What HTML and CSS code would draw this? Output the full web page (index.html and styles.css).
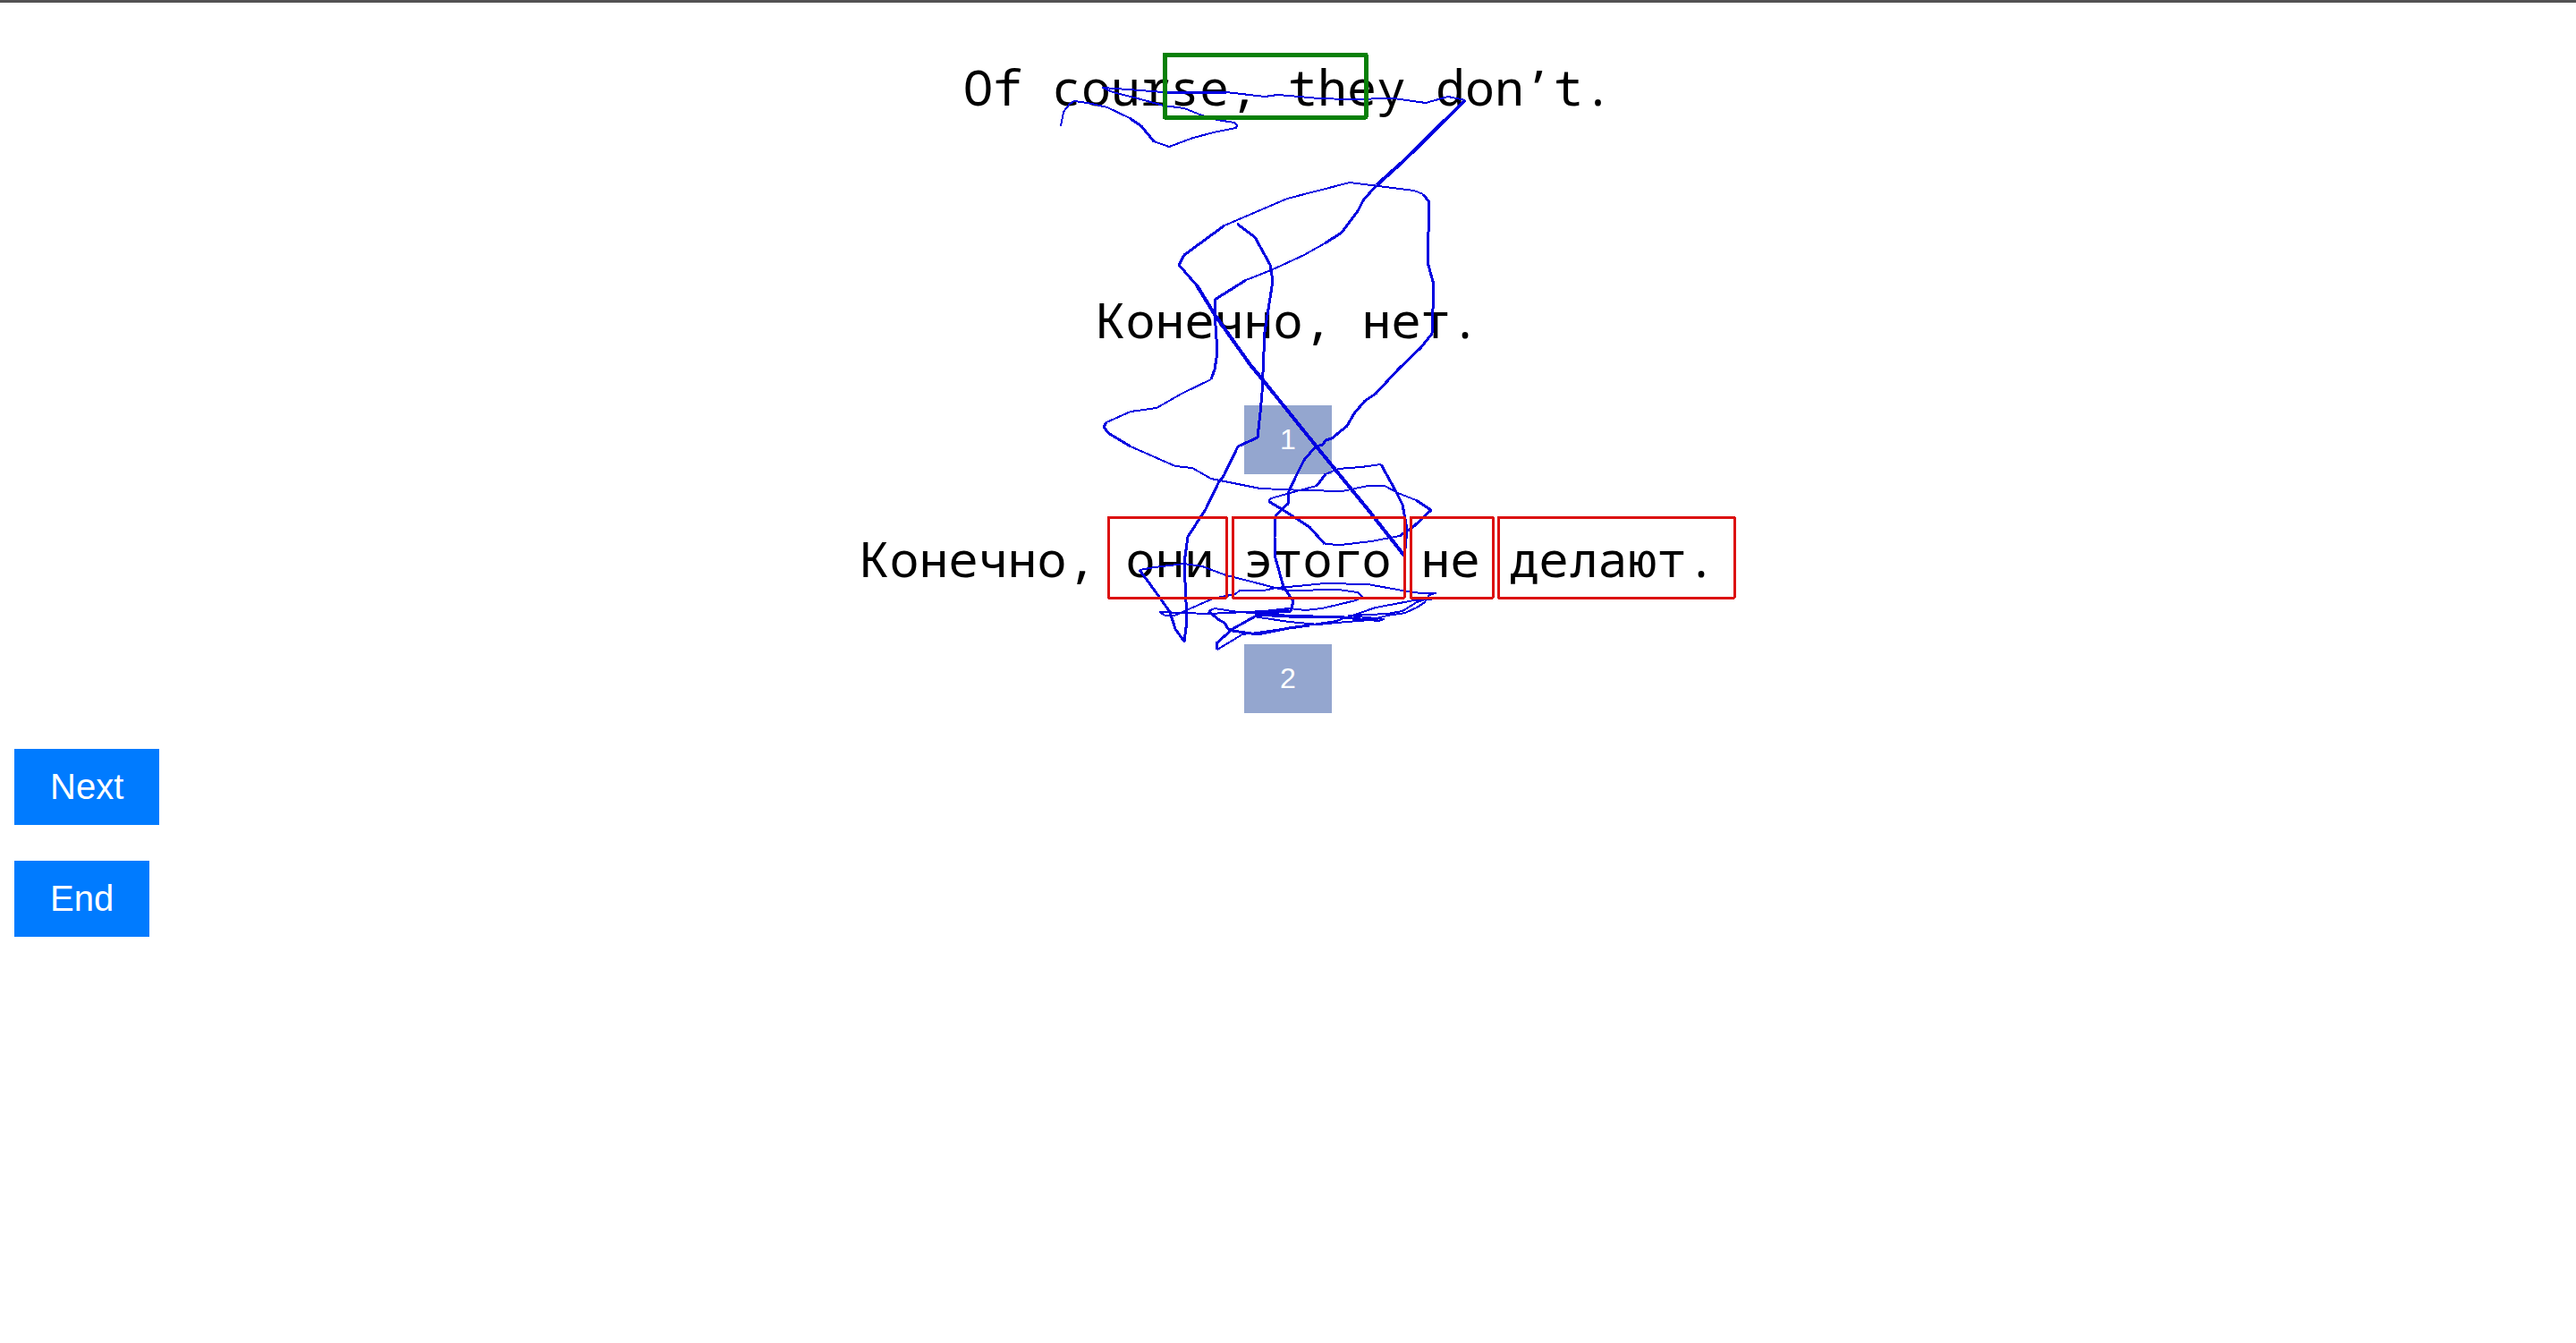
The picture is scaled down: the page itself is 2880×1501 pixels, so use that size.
FILE: index.html
```html
<!DOCTYPE html>
<html lang="ru">
<head>
<meta charset="utf-8">
<title>Translation choice</title>
<link rel="stylesheet" href="styles.css">
</head>
<body>
<main class="trial">
  <p class="sentence source" lang="en">Of course, they don’t.</p>
  <section class="option">
    <p class="sentence">Конечно, нет.</p>
    <button class="pick" type="button">1</button>
  </section>
  <section class="option">
    <p class="sentence">Конечно, они этого не делают.</p>
    <button class="pick" type="button">2</button>
  </section>
  <!-- pointer trace and word regions -->
  <svg class="overlay" viewBox="920 0 1040 760" aria-hidden="true">
    <g class="trace">
      <path d="M1185 140L1188 124L1195 115L1200 112L1215 114L1237 119L1262 131L1275 140L1289 157L1306 163L1333 153L1360 146L1381 142L1382 139L1379 136L1360 133L1343 128L1323 120L1300 117L1267 108L1243 102L1232 97L1260 99L1300 102L1370 102L1413 107L1427 105L1440 106L1473 109L1507 110L1557 109L1593 114L1618 107L1637 111"/>
      <path class="fast" d="M1262 131L1275 140L1289 157M1300 102L1370 102"/>
      <path class="fastest" d="M1637 111L1622 126L1567 180L1538 206"/>
      <path class="fast" d="M1538 206L1523 223L1517 235L1499 259L1480 271"/>
      <path d="M1480 271L1457 284L1420 301L1392 312"/>
      <path class="fast" d="M1392 312L1357 334L1358 363L1360 393L1357 412L1353 423"/>
      <path d="M1353 423L1320 439L1292 455L1263 459L1236 471L1233 476L1238 483L1263 498L1313 520L1332 522L1353 534L1408 545L1457 547L1500 548L1528 542L1547 542L1562 550L1582 558L1599 569"/>
      <path class="fast" d="M1236 471L1233 476L1238 483L1263 498M1582 558L1599 569L1580 587L1564 598"/>
      <path d="M1564 598L1532 604L1498 608L1480 607"/>
      <path class="fast" d="M1480 607L1463 588L1435 570L1417 559"/>
      <path d="M1417 559L1420 556L1441 550L1471 542L1481 529L1495 523L1521 521L1543 518"/>
      <path class="fast" d="M1471 542L1481 529M1543 518L1560 549L1567 563L1572 590L1569 624"/>
      <path class="fastest" d="M1569 620L1528 568L1474 502L1412 425L1397 407L1358 352L1337 318"/>
      <path class="fast" d="M1337 318L1317 295L1323 284L1368 251"/>
      <path d="M1368 251L1438 221L1508 203L1580 212L1590 216"/>
      <path class="fast" d="M1590 216L1597 225L1595 292L1602 317L1600 372L1587 388L1563 411L1537 439L1525 447L1513 461L1505 475L1488 489L1481 491L1478 496L1470 498L1457 513L1448 531L1439 550L1439 562L1432 568L1425 576L1424 600L1425 623L1427 630L1434 655L1445 671L1442 682L1403 685"/>
      <path class="fast" d="M1382 249L1402 264L1419 295L1422 313L1413 370L1410 438L1408 460L1405 488L1383 498L1367 531L1362 537L1347 568L1327 599L1323 628L1326 693L1323 716L1313 702L1307 683L1287 655L1273 636"/>
      <path d="M1273 636L1290 633L1323 629L1343 632L1370 642L1390 647L1425 656L1450 654L1480 651L1528 652L1567 659L1587 662L1604 662L1597 664L1592 672L1583 678L1570 684L1550 687L1530 692L1493 695L1473 697L1440 694L1407 689L1402 688"/>
      <path class="fast" d="M1402 688L1377 702L1359 718L1360 725"/>
      <path d="M1360 725L1388 708L1405 706L1440 701L1493 693L1537 678L1580 670L1600 669"/>
      <path d="M1295 683L1302 687L1312 687L1355 668L1380 663L1385 659L1412 659L1425 656L1440 659L1495 658L1517 661L1522 666L1515 670L1477 679L1458 681L1440 679L1413 682L1350 685L1295 683"/>
      <path class="fast" d="M1350 682L1362 692L1368 695L1372 702L1377 704L1405 708L1440 701L1463 698"/>
      <path d="M1350 682L1357 679L1383 683L1420 685L1440 687L1493 688L1520 691L1540 693L1546 691L1507 687L1550 685L1567 682L1583 672L1592 669"/>
      <path class="fast" d="M1402 686L1440 688L1493 688L1520 691L1540 692M1403 685L1440 681"/>
    </g>
    <rect class="selection" x="1301" y="60" width="225" height="70"/>
    <g class="words">
      <rect x="1238" y="577" width="132" height="90"/>
      <rect x="1377" y="577" width="192" height="90"/>
      <rect x="1576" y="577" width="92" height="90"/>
      <rect x="1674" y="577" width="264" height="90"/>
    </g>
  </svg>
</main>
<nav class="actions">
  <button class="action" type="button">Next</button>
  <button class="action" type="button">End</button>
</nav>
</body>
</html>
```
FILE: styles.css
```css
body {
  margin: 0;
  background: #fff;
  font-family: "Liberation Sans", Arial, sans-serif;
}

.trial {
  position: relative;
  display: flex;
  flex-direction: column;
  align-items: center;
  gap: 62px;
  padding-top: 62px;
  border-top: 3px solid #535253;
}

.sentence {
  margin: 0;
  font-family: "Noto Sans Mono", "DejaVu Sans Mono", monospace;
  font-size: 55px;
  line-height: 64px;
  white-space: nowrap;
  color: #000;
}

.source {
  margin-bottom: 134px;
}

.option {
  display: flex;
  flex-direction: column;
  align-items: center;
  gap: 64px;
}

.pick,
.action {
  border: 0;
  border-radius: 0;
  padding: 20px 40px;
  font-family: inherit;
  color: #fff;
}

.pick {
  font-size: 32px;
  line-height: 37px;
  background: #94a6cf;
}

.action {
  font-size: 40px;
  line-height: 45px;
  background: #007bff;
}

.actions {
  display: flex;
  flex-direction: column;
  align-items: flex-start;
  gap: 40px;
  padding: 40px 16px;
}

.overlay {
  position: absolute;
  top: 0;
  left: 50%;
  width: 1040px;
  height: 760px;
  margin: -2px 0 0 -519px;
  fill: none;
  pointer-events: none;
  shape-rendering: crispEdges;
}

.trace {
  stroke: #0000e0;
  stroke-width: 2;
  stroke-linejoin: round;
}

.fast {
  stroke-width: 3;
}

.fastest {
  stroke-width: 4;
}

.selection {
  stroke: #088008;
  stroke-width: 5;
  stroke-linejoin: round;
}

.words {
  stroke: #dc1010;
  stroke-width: 3;
  stroke-linejoin: round;
}
```
